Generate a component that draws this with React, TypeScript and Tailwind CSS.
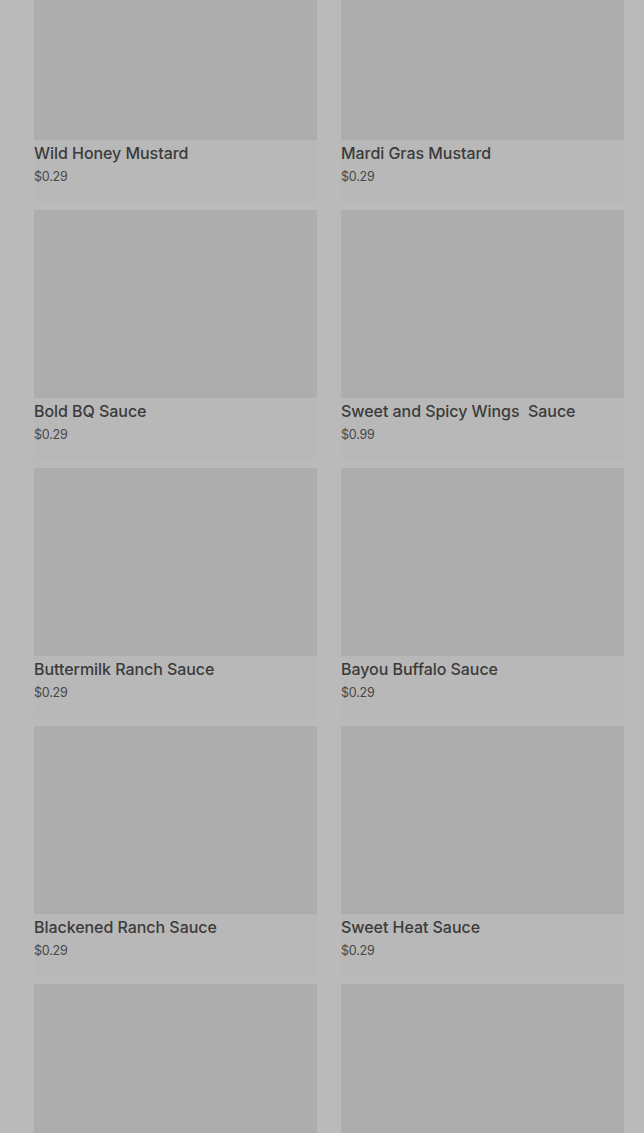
import React from "react";

const items = [
  { name: "Wild Honey Mustard", price: "$0.29" },
  { name: "Mardi Gras Mustard", price: "$0.29" },
  { name: "Bold BQ Sauce", price: "$0.29" },
  { name: "Sweet and Spicy Wings\u00a0 Sauce", price: "$0.99" },
  { name: "Buttermilk Ranch Sauce", price: "$0.29" },
  { name: "Bayou Buffalo Sauce", price: "$0.29" },
  { name: "Blackened Ranch Sauce", price: "$0.29" },
  { name: "Sweet Heat Sauce", price: "$0.29" },
  { name: "", price: "" },
  { name: "", price: "" },
];

export default function App() {
  return (
    <div
      className="w-[644px] h-[1133px] overflow-hidden bg-[#bababa]"
      style={{ fontFamily: "Inter, 'Noto Sans', sans-serif" }}
    >
      <div className="mt-[-48px] pl-[34px] pr-[20px] grid grid-cols-2 gap-x-[24px]">
        {items.map((it, i) => (
          <div key={i} className="h-[258px] flex flex-col">
            <div className="h-[188px] bg-[#adadad]" />
            <div className="bg-[#b8b8b8] h-[63px] pt-[1px]">
              <div className="text-[16px] leading-[24px] text-[#3b3b3b] font-medium tracking-[-0.05px]">
                {it.name}
              </div>
              <div className="mt-[3px] text-[12.5px] leading-[18px] text-[#474747] tracking-[-0.2px]">
                {it.price}
              </div>
            </div>
          </div>
        ))}
      </div>
    </div>
  );
}
